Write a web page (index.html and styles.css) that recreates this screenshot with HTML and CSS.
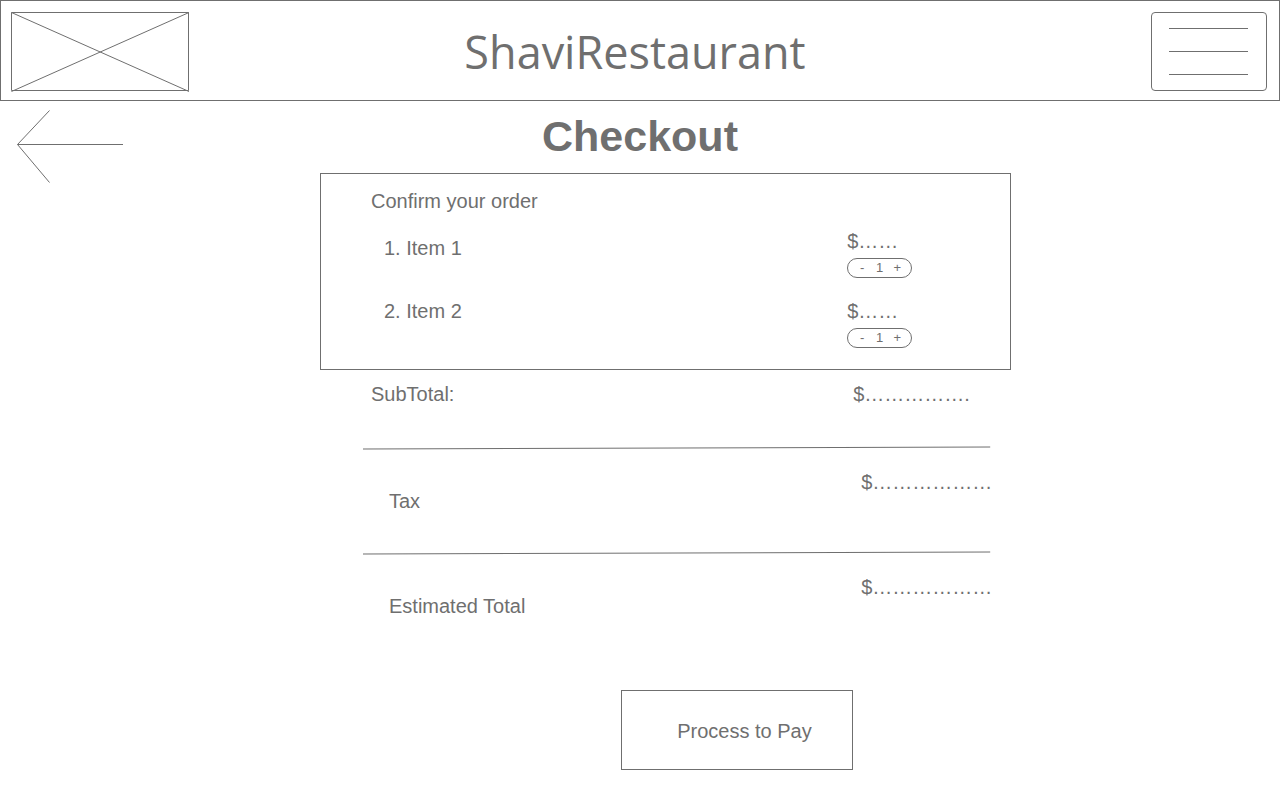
FILE: index.html
```html
<!DOCTYPE html>
<html lang="en">
<head>
<meta charset="utf-8">
<meta name="viewport" content="width=device-width, initial-scale=1">
<title>ShaviRestaurant – Checkout</title>
<link rel="stylesheet" href="styles.css">
</head>
<body>
<header class="site-header">
  <svg class="logo" viewBox="0 0 178 80" role="img" aria-label="Logo">
    <path d="M.5 .5H177.500V78.500H.5ZM.5 .5L178 79.500M178 .5L.5 79.500"/>
  </svg>
  <p class="brand">ShaviRestaurant</p>
  <button class="menu" type="button" aria-label="Menu">
    <svg class="menu-icon" viewBox="0 0 79 48" aria-hidden="true"><path d="M0 .5H79M0 23.500H79M0 46.500H79"/></svg>
  </button>
</header>
<main class="page">
  <a class="back" href="#" aria-label="Back">
    <svg class="back-icon" viewBox="0 0 106 73" aria-hidden="true"><path d="M106 34.500H.5M32.500 .5L.5 34.500L32.500 72.500"/></svg>
  </a>
  <h1 class="title">Checkout</h1>
  <div class="content">
    <section class="order">
      <h2 class="order-title">Confirm your order</h2>
      <div class="item">
        <p class="item-name item-name-first">1. Item 1</p>
        <div class="item-side">
          <p>$……</p>
          <div class="stepper">
            <button class="step" type="button" aria-label="Remove one Item 1">-</button>
            <output>1</output>
            <button class="step" type="button" aria-label="Add one Item 1">+</button>
          </div>
        </div>
      </div>
      <div class="item">
        <p class="item-name">2. Item 2</p>
        <div class="item-side">
          <p>$……</p>
          <div class="stepper">
            <button class="step" type="button" aria-label="Remove one Item 2">-</button>
            <output>1</output>
            <button class="step" type="button" aria-label="Add one Item 2">+</button>
          </div>
        </div>
      </div>
    </section>
    <section class="totals">
      <div class="subtotal">
        <p>SubTotal:</p>
        <p>$…………….</p>
      </div>
      <svg class="divider" viewBox="0 0 626 3" preserveAspectRatio="none" aria-hidden="true"><path d="M0 3L626 1"/></svg>
      <div class="charge">
        <p class="charge-name">Tax</p>
        <p>$………………</p>
      </div>
      <svg class="divider" viewBox="0 0 626 3" preserveAspectRatio="none" aria-hidden="true"><path d="M0 3L626 1"/></svg>
      <div class="charge">
        <p class="charge-name">Estimated Total</p>
        <p>$………………</p>
      </div>
    </section>
    <button class="pay" type="button">Process to Pay</button>
  </div>
</main>
</body>
</html>
```
FILE: styles.css
```css
* {
  box-sizing: border-box;
}

body {
  margin: 0;
  background: #fff;
  color: #6f6f6f;
  font-family: "Liberation Sans", Arial, sans-serif;
  font-size: 20px;
  line-height: 24px;
}

p, h1, h2 {
  margin: 0;
}

button {
  padding: 0;
  border: 1px solid #6f6f6f;
  background: transparent;
  color: inherit;
  font: inherit;
  cursor: pointer;
}

svg {
  display: block;
  overflow: visible;
  fill: none;
  stroke: #6f6f6f;
  stroke-width: 1;
}

.site-header {
  display: grid;
  grid-template-columns: 1fr auto 1fr;
  align-items: start;
  padding: 11px 12px 8px 10px;
  border: 1px solid #6f6f6f;
}

.logo {
  width: 178px;
  height: 80px;
}

.brand {
  padding-right: 8px;
  font-family: "Trebuchet MS", "Open Sans", sans-serif;
  font-size: 45px;
  line-height: 80px;
}

.menu {
  justify-self: end;
  width: 116px;
  height: 79px;
  padding: 0 17px;
  border-radius: 4px;
}

.menu-icon {
  width: 79px;
  height: 48px;
}

.page {
  display: grid;
  grid-template-columns: 25% 54% 1fr;
  grid-template-rows: 72px auto;
  padding-bottom: 30px;
}

.back {
  grid-area: 1 / 1 / 3 / 2;
  justify-self: start;
  align-self: start;
  margin: 9px 0 0 17px;
}

.back-icon {
  width: 106px;
  height: 73px;
}

.title {
  grid-area: 1 / 1 / 2 / 4;
  justify-self: center;
  font-size: 43px;
  line-height: 70px;
}

.content {
  grid-area: 2 / 2 / 3 / 3;
}

.order {
  display: grid;
  padding: 15px 0 21px 50px;
  border: 1px solid #6f6f6f;
}

.order-title {
  margin-bottom: 16px;
  font-size: 20px;
  font-weight: 400;
}

.item {
  display: grid;
  grid-template-columns: 1fr 163px;
}

.item + .item {
  margin-top: 21px;
}

.item-name {
  padding-left: 13px;
}

.item-name-first {
  padding-top: 7px;
}

.item-side {
  display: grid;
  gap: 5px;
}

.stepper {
  display: grid;
  grid-template-columns: 1fr auto 1fr;
  align-items: center;
  width: 65px;
  height: 20px;
  border: 1px solid #6f6f6f;
  border-radius: 10px;
  font-size: 13px;
  line-height: 18px;
}

.step {
  border: 0;
}

.totals {
  padding: 12px 21px 0 43px;
}

.subtotal {
  display: grid;
  grid-template-columns: 1fr 137px;
  padding: 0 0 40px 8px;
}

.divider {
  width: 100%;
  height: 3px;
}

.charge {
  display: grid;
  grid-template-columns: 1fr 129px;
  height: 102px;
  padding: 21px 0 0 26px;
}

.charge-name {
  padding-top: 19px;
}

.pay {
  display: block;
  width: 232px;
  height: 80px;
  margin: 34px 0 0 301px;
  padding: 2px 0 0 15px;
}
```
